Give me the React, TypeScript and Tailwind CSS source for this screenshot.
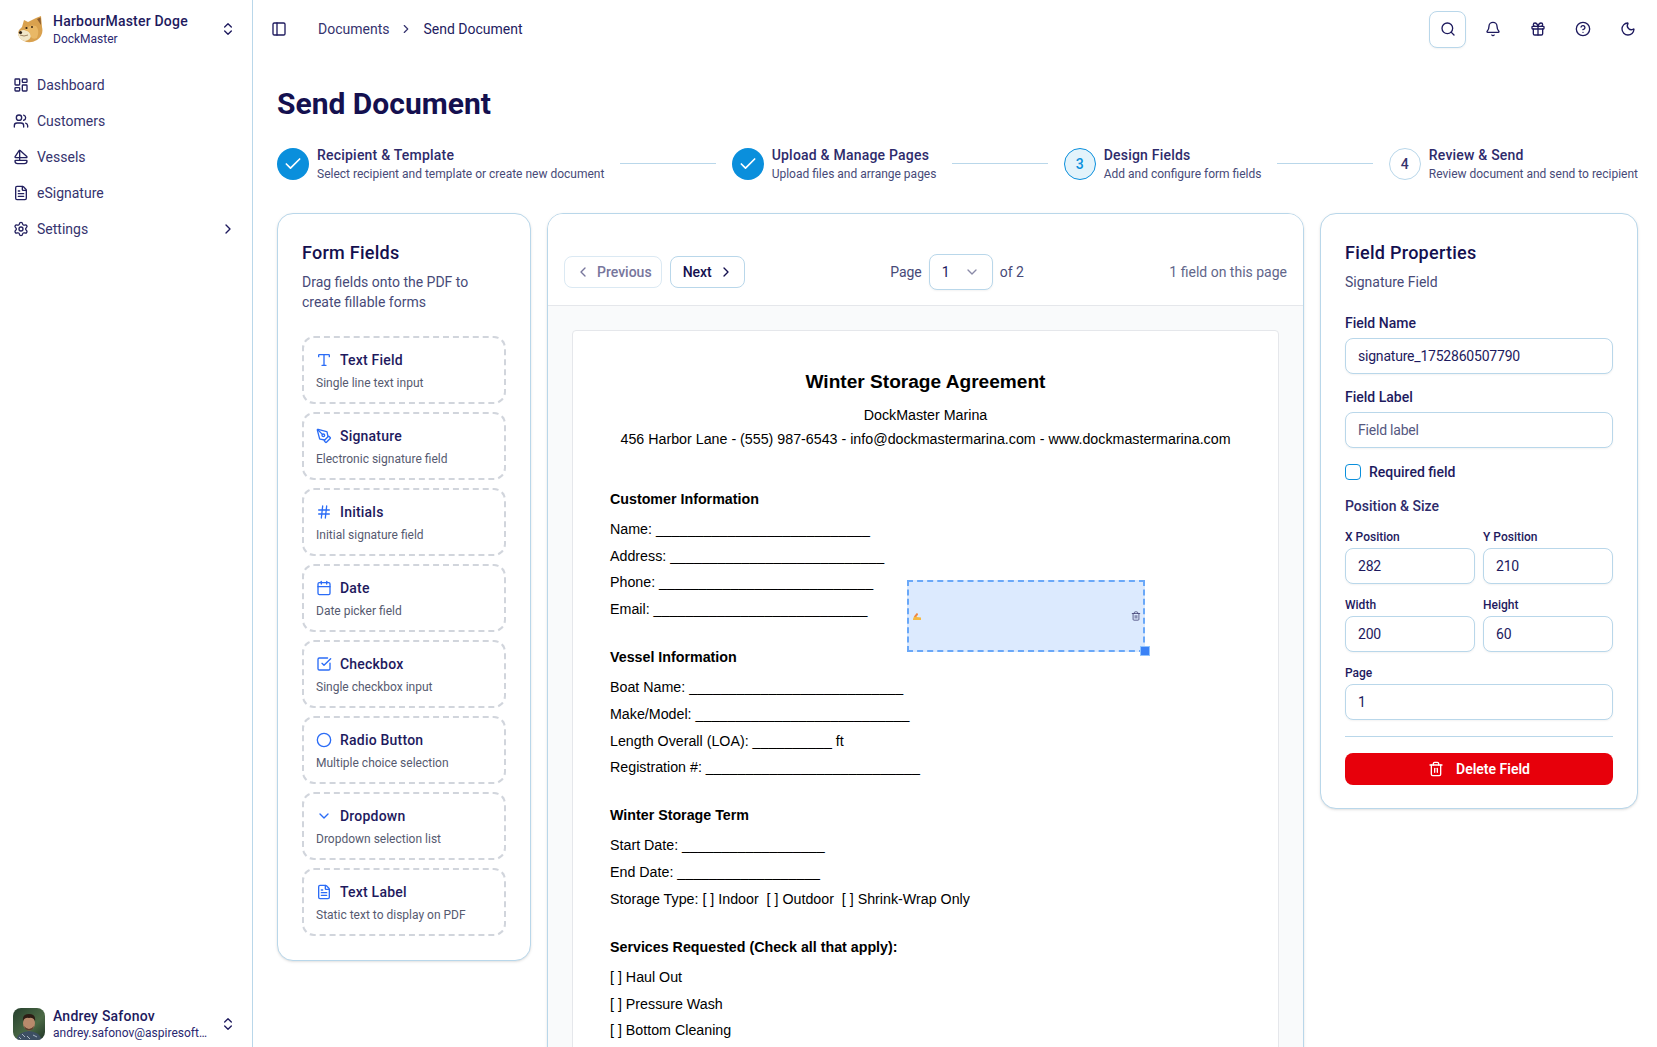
import React from "react";
import {
  LayoutDashboard, Users, Sailboat, FileText, Settings, ChevronRight, ChevronLeft, ChevronsUpDown, ChevronDown,
  PanelLeft, Search, Bell, Gift, CircleHelp, Moon, Check, Type, PenTool, Hash, Calendar, SquareCheckBig, Circle, Trash2,
} from "lucide-react";

function Doge() {
  return (
    <svg width="27" height="28" viewBox="0 0 27 28" className="shrink-0">
      <path d="M19 3 L24 1 L25 12 Q27 20 20 25 Q13 29 7 26 Q1 23 1 18 Q2 14 5 12 L7 5 L11 7 Q15 5 19 3Z" fill="#d9a14e" />
      <path d="M20 4 L23.5 2.5 L24 10 Z" fill="#8a5a2b" />
      <path d="M1 19 Q2 15 7 15 Q13 16 14 20 Q14 25 8 26 Q2 25 1 19Z" fill="#f1e6c8" />
      <path d="M8 15 Q12 9 19 11 Q23 15 20 23 Q16 25 14 22 Q13 16 8 15Z" fill="#e9b866" />
      <circle cx="3.5" cy="17.5" r="1.6" fill="#2b1d12" />
      <circle cx="9.5" cy="13" r="1.1" fill="#2b1d12" />
      <circle cx="15" cy="12" r="1" fill="#3a2614" />
      <path d="M3 20 Q7 22 11 20" stroke="#7a5a3a" strokeWidth="0.7" fill="none" />
    </svg>
  );
}

function Avatar() {
  return (
    <svg width="32" height="32" viewBox="0 0 32 32" className="shrink-0 rounded-lg">
      <defs>
        <linearGradient id="bg" x1="0" y1="0" x2="1" y2="1">
          <stop offset="0" stopColor="#26402e" />
          <stop offset="0.6" stopColor="#4c6a45" />
          <stop offset="1" stopColor="#1f3325" />
        </linearGradient>
      </defs>
      <rect width="32" height="32" fill="url(#bg)" />
      <path d="M3 32 Q5 24 16 23 Q27 24 29 32Z" fill="#3d4f63" />
      <path d="M9 26 L12 29 M20 27 L24 29 M14 28 L17 31 M6 29 L8 31" stroke="#a9b6c2" strokeWidth="1" />
      <ellipse cx="16" cy="15" rx="6" ry="7.5" fill="#b98a6c" />
      <path d="M10 13 Q9 6 16 6 Q23 6 22 13 Q20 9 16 10 Q12 9 10 13Z" fill="#2c1c14" />
      <path d="M11 18 Q16 24 21 18 Q20 22.5 16 22.5 Q12 22.5 11 18Z" fill="#5a3d2e" />
    </svg>
  );
}

const nav = [
  { label: "Dashboard", Icon: LayoutDashboard },
  { label: "Customers", Icon: Users },
  { label: "Vessels", Icon: Sailboat },
  { label: "eSignature", Icon: FileText },
  { label: "Settings", Icon: Settings },
];

const steps = [
  { title: "Recipient & Template", sub: "Select recipient and template or create new document", state: "done" },
  { title: "Upload & Manage Pages", sub: "Upload files and arrange pages", state: "done" },
  { title: "Design Fields", sub: "Add and configure form fields", state: "active", n: "3" },
  { title: "Review & Send", sub: "Review document and send to recipient", state: "todo", n: "4" },
];

const fields = [
  { t: "Text Field", s: "Single line text input", Icon: Type },
  { t: "Signature", s: "Electronic signature field", Icon: PenTool },
  { t: "Initials", s: "Initial signature field", Icon: Hash },
  { t: "Date", s: "Date picker field", Icon: Calendar },
  { t: "Checkbox", s: "Single checkbox input", Icon: SquareCheckBig },
  { t: "Radio Button", s: "Multiple choice selection", Icon: Circle },
  { t: "Dropdown", s: "Dropdown selection list", Icon: ChevronDown },
  { t: "Text Label", s: "Static text to display on PDF", Icon: FileText },
];

const u = (n: number) => "_".repeat(n);

const sections = [
  { h: "Customer Information", lines: [`Name: ${u(27)}`, `Address: ${u(27)}`, `Phone: ${u(27)}`, `Email: ${u(27)}`] },
  { h: "Vessel Information", lines: [`Boat Name: ${u(27)}`, `Make/Model: ${u(27)}`, `Length Overall (LOA): ${u(10)} ft`, `Registration #: ${u(27)}`] },
  { h: "Winter Storage Term", lines: [`Start Date: ${u(18)}`, `End Date: ${u(18)}`, "Storage Type: [ ] Indoor\u00a0\u00a0[ ] Outdoor\u00a0\u00a0[ ] Shrink-Wrap Only"] },
  { h: "Services Requested (Check all that apply):", lines: ["[ ] Haul Out", "[ ] Pressure Wash", "[ ] Bottom Cleaning"] },
];

function Field({ label, value, small, placeholder }: { label: string; value?: string; small?: boolean; placeholder?: string }) {
  return (
    <div className="flex flex-col min-w-0">
      <label className={small ? "mb-[3px] text-xs font-medium leading-4 text-[#1e1a5e]" : "mb-[5px] text-sm font-medium leading-5 text-[#1e1a5e]"}>{label}</label>
      <input
        readOnly
        value={value ?? ""}
        placeholder={placeholder}
        className="h-9 w-full rounded-lg border border-[#b9d7ea] bg-white px-3 text-sm tracking-[-0.015em] text-[#1e1a5e] placeholder:text-[#55587f] shadow-xs outline-none"
      />
    </div>
  );
}

export default function App() {
  return (
    <div className="flex h-screen w-full overflow-hidden bg-white text-[#1e1a5e] font-[family-name:Roboto,sans-serif]">
      <aside className="flex w-[253px] shrink-0 flex-col border-r border-[#b9d7ea] bg-white">
        <div className="flex h-[58px] items-center pl-[17px] pr-[16px]">
          <Doge />
          <div className="ml-[9px] min-w-0 flex-1">
            <div className="text-sm font-medium leading-[19px] tracking-[0.015em] text-[#1e1a5e]">HarbourMaster Doge</div>
            <div className="text-xs leading-4 text-[#2b2770]">DockMaster</div>
          </div>
          <ChevronsUpDown size={16} className="text-[#1e1a5e]" />
        </div>
        <nav className="mt-[9px] flex flex-col">
          {nav.map(({ label, Icon }) => (
            <div key={label} className="flex h-9 items-center pl-[13px] pr-[16px] text-sm text-[#35336e]">
              <Icon size={16} className="text-[#23205f]" />
              <span className="ml-2 flex-1">{label}</span>
              {label === "Settings" && <ChevronRight size={16} className="text-[#1e1a5e]" />}
            </div>
          ))}
        </nav>
        <div className="mt-auto flex items-center pb-[6px] pl-[13px] pr-[16px]">
          <Avatar />
          <div className="ml-2 min-w-0 flex-1">
            <div className="text-sm font-medium leading-[18px] tracking-[0.015em] text-[#1e1a5e]">Andrey Safonov</div>
            <div className="truncate text-xs leading-[16px] text-[#2b2770]">andrey.safonov@aspiresoft.com</div>
          </div>
          <ChevronsUpDown size={16} className="ml-[10px] shrink-0 text-[#1e1a5e]" />
        </div>
      </aside>

      <main className="min-w-0 flex-1 overflow-hidden">
        <header className="flex h-[58px] items-center pl-[18px] pr-[11px]">
          <PanelLeft size={16} className="text-[#1e1a5e]" />
          <span className="ml-[31px] text-sm text-[#35336e]">Documents</span>
          <ChevronRight size={14} className="mx-[10px] text-[#35336e]" />
          <span className="text-sm text-[#23205f]">Send Document</span>
          <div className="ml-auto flex items-center gap-[9px]">
            <div className="flex size-[37px] items-center justify-center rounded-lg border border-[#b9d7ea] bg-white shadow-xs">
              <Search size={16} />
            </div>
            {[Bell, Gift, CircleHelp, Moon].map((Icon, i) => (
              <div key={i} className="flex size-9 items-center justify-center">
                <Icon size={16} />
              </div>
            ))}
          </div>
        </header>

        <div className="pl-[24px] pr-[19px] pt-[28px]">
          <h1 className="text-3xl font-bold leading-9 text-[#14104f]">Send Document</h1>

          <div className="mt-[23px] flex items-center gap-4">
            {steps.map((s, i) => (
              <React.Fragment key={s.title}>
                {i > 0 && <div className="h-px min-w-0 flex-1 bg-[#b9d7ea]" />}
                <div className="flex shrink-0 items-center gap-2">
                  {s.state === "done" && (
                    <div className="flex size-8 items-center justify-center rounded-full bg-[#0a8fdc] text-white">
                      <Check size={20} />
                    </div>
                  )}
                  {s.state === "active" && (
                    <div className="flex size-8 items-center justify-center rounded-full border border-[#0a8fdc] bg-[#e3f3fb] text-sm font-medium text-[#0a8fdc]">{s.n}</div>
                  )}
                  {s.state === "todo" && (
                    <div className="flex size-8 items-center justify-center rounded-full border border-[#b9d7ea] bg-white text-sm font-medium text-[#35336e]">{s.n}</div>
                  )}
                  <div>
                    <div className="text-sm font-medium leading-5 tracking-[0.015em] text-[#2e2b6b]">{s.title}</div>
                    <div className="mt-px text-xs leading-4 text-[#474a78]">{s.sub}</div>
                  </div>
                </div>
              </React.Fragment>
            ))}
          </div>

          <div className="mt-[31px] grid grid-cols-[254px_757px_318px] items-start gap-4">
            <section className="rounded-2xl border border-[#b9d7ea] bg-white p-6 shadow-sm">
              <h2 className="pt-px text-lg font-medium leading-7 tracking-[0.015em] text-[#14104f]">Form Fields</h2>
              <p className="mt-[5px] text-sm leading-5 text-[#474a78]">Drag fields onto the PDF to create fillable forms</p>
              <div className="mt-6 flex flex-col gap-2">
                {fields.map(({ t, s, Icon }) => (
                  <div key={t} className="h-[68px] rounded-xl border-2 border-dashed border-[#d1d5dc] px-3 pt-[12px]">
                    <div className="flex items-center gap-2 text-sm font-medium leading-5 tracking-[0.015em] text-[#1e1a5e]">
                      <Icon size={16} className="text-[#2b6cf6]" />
                      {t}
                    </div>
                    <div className="mt-[5px] text-xs leading-4 text-[#565a70]">{s}</div>
                  </div>
                ))}
              </div>
            </section>

            <section className="h-[1000px] overflow-hidden rounded-2xl border border-[#b9d7ea] bg-[#f9fafb] shadow-sm">
              <div className="flex items-center justify-between border-b border-[#e5e7eb] bg-white px-4 pb-[15px] pt-[40px]">
                <div className="flex items-center gap-2">
                  <div className="flex h-8 items-center gap-[6px] rounded-lg border border-[#dbe9f3] bg-white pl-[10px] pr-[9px] text-sm font-medium text-[#77769c]">
                    <ChevronLeft size={16} />
                    Previous
                  </div>
                  <div className="flex h-8 items-center gap-[6px] rounded-lg border border-[#b9d7ea] bg-white pl-[12px] pr-[10px] text-sm font-medium text-[#14104f]">
                    Next
                    <ChevronRight size={16} />
                  </div>
                </div>
                <div className="flex items-center gap-[7px] text-sm text-[#474a78]">
                  Page
                  <div className="flex h-9 w-16 items-center justify-between rounded-lg border border-[#b9d7ea] bg-white pl-3 pr-[12px] text-[#1e1a5e] shadow-xs">
                    1
                    <ChevronDown size={16} className="text-[#8a8aa8]" />
                  </div>
                  of 2
                </div>
                <div className="text-right text-sm text-[#62668a]">1 field on this page</div>
              </div>
              <div className="p-6">
                <div className="relative h-[900px] rounded-sm border border-[#e5e7eb] bg-white pl-[37px] pr-[37px] pt-[37px] font-[family-name:'Liberation_Sans',Arial,sans-serif] text-[14.25px] text-black">
                  <div className="text-center text-[19.1px] font-bold leading-7">Winter Storage Agreement</div>
                  <div className="mt-[7px] text-center leading-6">DockMaster Marina</div>
                  <div className="whitespace-nowrap text-center leading-6">456 Harbor Lane - (555) 987-6543 - info@dockmastermarina.com - www.dockmastermarina.com</div>
                  <div className="mt-[38px] flex flex-col gap-[24.4px]">
                    {sections.map((sec) => (
                      <div key={sec.h}>
                        <div className="mb-[7px] font-bold leading-5">{sec.h}</div>
                        {sec.lines.map((l) => (
                          <div key={l} className="leading-[26.7px]">{l}</div>
                        ))}
                      </div>
                    ))}
                  </div>
                  <div className="absolute left-[334px] top-[249px] flex h-[72px] w-[238px] items-center justify-between border-2 border-dashed border-[#6aa8f8] bg-[#dceafe] pl-[4px] pr-[2px]">
                    <svg width="8" height="8" viewBox="0 0 8 8">
                      <path d="M0 7 L1 4.5 L4 1 L5 2.5 L3.5 5 L8 5.5 L8 8 L0 8Z" fill="#f5b942" />
                      <path d="M1 4.5 L4 1 L5 2.5 L2.5 5Z" fill="#ef7f4a" />
                    </svg>
                    <Trash2 size={10} className="text-[#47477a]" />
                    <div className="absolute -bottom-[5px] -right-[6px] size-[8px] bg-[#3b82f6] outline outline-1 outline-[#93c5fd]" />
                  </div>
                </div>
              </div>
            </section>

            <section className="rounded-2xl border border-[#b9d7ea] bg-white px-6 pb-[23px] pt-6 shadow-sm">
              <h2 className="pt-px text-lg font-medium leading-7 tracking-[0.015em] text-[#14104f]">Field Properties</h2>
              <p className="mt-[5px] text-sm leading-5 text-[#474a78]">Signature Field</p>
              <div className="mt-[21px] flex flex-col gap-[13px]">
                <Field label="Field Name" value="signature_1752860507790" />
                <Field label="Field Label" placeholder="Field label" />
              </div>
              <div className="mt-[16px] flex h-4 items-center gap-2 text-sm font-medium text-[#1e1a5e]">
                <div className="size-4 rounded-[4px] border border-[#0a8fdc] bg-white" />
                Required field
              </div>
              <div className="mt-[16px] text-sm font-medium leading-5 text-[#2e2b6b]">Position &amp; Size</div>
              <div className="mt-[13px] grid grid-cols-2 gap-x-2 gap-y-[13px]">
                <Field small label="X Position" value="282" />
                <Field small label="Y Position" value="210" />
                <Field small label="Width" value="200" />
                <Field small label="Height" value="60" />
                <div className="col-span-2">
                  <Field small label="Page" value="1" />
                </div>
              </div>
              <div className="mt-4 h-px bg-[#b9d7ea]" />
              <div className="mt-4 flex h-8 items-center justify-center gap-3 rounded-lg bg-[#e7000b] text-sm font-semibold text-white">
                <Trash2 size={16} />
                Delete Field
              </div>
            </section>
          </div>
        </div>
      </main>
    </div>
  );
}
